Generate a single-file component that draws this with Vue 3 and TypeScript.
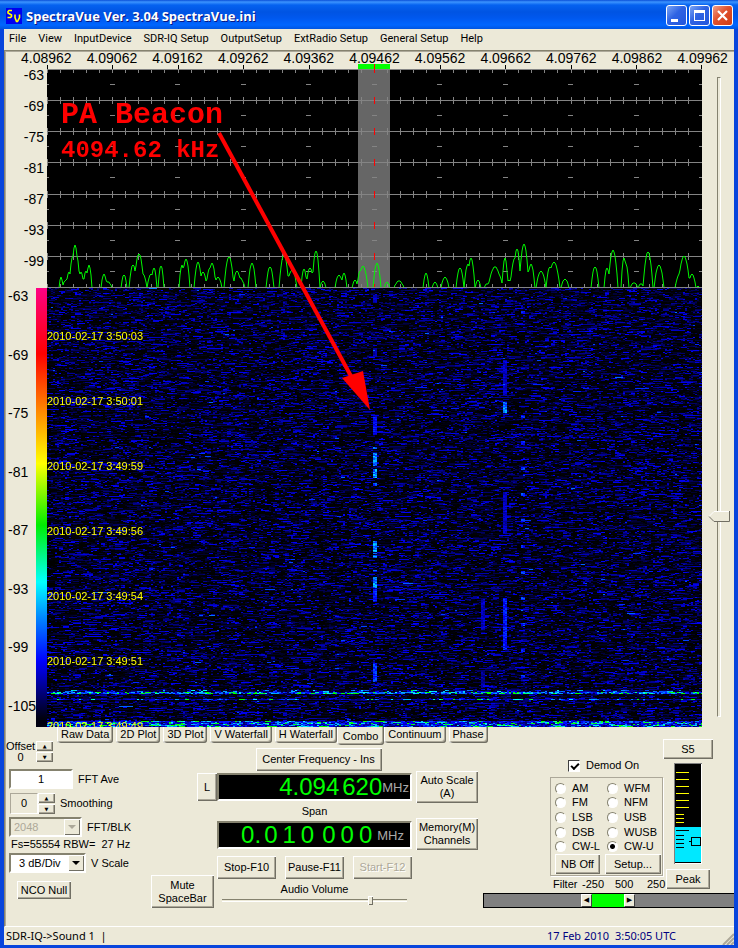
<script setup lang="ts">
import { onMounted, ref } from 'vue'

const menus = ['File', 'View', 'InputDevice', 'SDR-IQ Setup', 'OutputSetup', 'ExtRadio Setup', 'General Setup', 'Help']
const freqs = ['4.08962', '4.09062', '4.09162', '4.09262', '4.09362', '4.09462', '4.09562', '4.09662', '4.09762', '4.09862', '4.09962']
const levels = [-63, -69, -75, -81, -87, -93, -99]
const fallLevels = [-63, -69, -75, -81, -87, -93, -99, -105]
const stamps = ['3:50:03', '3:50:01', '3:49:59', '3:49:56', '3:49:54', '3:49:51', '3:49:49']
const tabs = ['Raw Data', '2D Plot', '3D Plot', 'V Waterfall', 'H Waterfall', 'Combo', 'Continuum', 'Phase']
const modes = ['AM', 'WFM', 'FM', 'NFM', 'LSB', 'USB', 'DSB', 'WUSB', 'CW-L', 'CW-U']

const activeTab = ref('Combo')
const mode = ref('CW-U')
const demod = ref(true)
const fftAve = ref('1')
const block = ref('2048')
const scale = ref('3 dB/Div')
const volume = ref(81)
const threshold = ref(69)

const W = 655
const gridY = [2, 33, 64, 95, 127, 158, 189, 220]
const majors = Array.from({ length: 11 }, (_, i) => Math.min(i * 65.5, 654.5))
const minors = Array.from({ length: 51 }, (_, i) => i * 13.1)

// Peaks of the live trace: centre x, height, half width
const peaks: [number, number, number][] = [
  [14, 11, 2], [19, 8, 4], [22, 16, 3], [26, 32, 4], [28, 43, 4], [30, 30, 3], [34, 16, 3], [39, 17, 3], [42, 23, 3],
  [57, 14, 3], [61, 6, 4], [77, 13, 3], [86, 23, 4], [90, 18, 2], [92, 34, 5], [96, 14, 4], [104, 14, 4], [107, 20, 3],
  [114, 22, 3], [135, 23, 3], [139, 29, 4], [151, 26, 4], [156, 16, 4], [163, 20, 4], [165, 25, 4], [171, 11, 4],
  [182, 31, 5], [190, 17, 4], [193, 10, 5], [205, 25, 4], [223, 21, 4], [237, 33, 5], [245, 18, 5], [257, 19, 3],
  [263, 20, 4], [269, 37, 4], [276, 7, 3], [292, 13, 4], [297, 15, 3], [308, 8, 3], [313, 17, 3], [316, 22, 5],
  [330, 25, 4], [340, 6, 3], [352, 7, 5], [379, 15, 3], [388, 6, 3], [398, 11, 4], [413, 20, 4], [421, 24, 4],
  [424, 30, 4], [431, 8, 3], [440, 4, 3], [448, 21, 7], [451, 14, 5], [458, 30, 3], [462, 8, 3], [468, 30, 5],
  [470, 39, 4], [477, 44, 5], [484, 24, 4], [494, 17, 5], [503, 21, 4], [507, 26, 6], [518, 9, 4], [548, 21, 4],
  [560, 20, 3], [566, 38, 5], [577, 30, 3], [579, 24, 3], [587, 5, 4], [594, 4, 3], [601, 36, 5], [612, 23, 5],
  [634, 16, 6], [637, 32, 6], [645, 14, 4], [651, 2, 2],
]

function tracePoints(): string {
  const points: string[] = []
  for (let x = 0; x <= W; x++) {
    let h = 0
    for (const [c, height, half] of peaks) {
      const d = Math.abs(x - c) / half
      if (d < 1) h = Math.max(h, height * (1 - d * d))
    }
    points.push(`${x},${Math.round(220 - h)}`)
  }
  return points.join(' ')
}
const trace = tracePoints()

const fall = ref<HTMLCanvasElement | null>(null)

// Vertical carriers: x, start y, end y, strength
const carriers: [number, number, number, number][] = [
  [326, 7, 15, 0.9], [326, 60, 68, 0.8], [326, 129, 147, 1.2], [326, 159, 161, 1.7], [326, 165, 178, 1.9],
  [326, 181, 190, 1.9], [326, 195, 198, 1.5], [326, 253, 264, 1.9], [326, 267, 270, 1.9], [326, 282, 284, 1.5],
  [326, 289, 300, 1.9], [326, 301, 314, 1.3], [326, 375, 394, 1.4], [456, 72, 108, 0.95], [456, 114, 125, 1.8],
  [456, 204, 246, 0.9], [456, 310, 362, 1.3], [434, 312, 342, 0.9], [434, 382, 400, 0.7],
]
const blips = [24, 128, 154, 180, 206, 232, 258, 284, 310, 336, 362, 388]

onMounted(() => {
  const ctx = fall.value?.getContext('2d')
  if (!ctx) return
  const H = 439
  let seed = 90210
  const rnd = () => {
    seed = (seed + 0x6d2b79f5) | 0
    let t = Math.imul(seed ^ (seed >>> 15), 1 | seed)
    t = (t + Math.imul(t ^ (t >>> 7), 61 | t)) ^ t
    return ((t ^ (t >>> 14)) >>> 0) / 4294967296
  }
  const img = ctx.createImageData(W, H)
  for (let y = 0; y < H; y++) {
    let v = 0
    for (let x = 0; x < W; x += 2) {
      if (rnd() > 0.42) v = Math.pow(rnd(), 3.6) * (rnd() > 0.97 ? 1.45 : 1)
      let s = v
      for (const [cx, y0, y1, k] of carriers) {
        if (y >= y0 && y < y1 && x >= cx && x <= cx + 3) s = Math.max(s, k * (0.6 + 0.4 * rnd()))
      }
      for (const by of blips) {
        if (Math.abs(y - by) < 2 && x >= 474 && x < 478) s = Math.max(s, 0.8 + rnd() * 0.6)
      }
      if (y === 110 && x < 430 && rnd() > 0.6) s += 0.35
      if (y >= 402 && y <= 403) s += 0.9 * v + 0.3 * rnd()
      if (y >= 404 && y <= 405) s += rnd() > 0.25 ? 0.8 + v + rnd() * 0.8 : 0.3
      if (y === 411) s += 0.3 + v + rnd() * 0.4
      if (y >= 433) s += 0.2 + v * 1.2 + rnd() * 0.9
      let g = 0
      let b = 0
      if (s < 1) b = s * 255
      else if (s < 2) { g = (s - 1) * 255; b = 255 }
      else { g = 255; b = Math.max(0, 255 - (s - 2) * 900) }
      for (let k = 0; k < 2 && x + k < W; k++) {
        const i = (y * W + x + k) * 4
        img.data[i] = 0
        img.data[i + 1] = g
        img.data[i + 2] = b
        img.data[i + 3] = 255
      }
    }
  }
  ctx.putImageData(img, 0, 0)
})
</script>

<template>
  <div class="window">
    <header class="title">
      <svg class="logo" viewBox="0 0 16 16" aria-hidden="true">
        <rect width="16" height="16" fill="#0000f0" />
        <path d="M6 2.500H3L2 3.500V5L5.500 7V8.500L4.500 9.500H1.500M9 6.500V9.500L10.500 13.500H11.500L13.500 9.500V6.500" fill="none" stroke="#ff0" stroke-width="1.600" />
      </svg>
      <h1>SpectraVue Ver. 3.04 SpectraVue.ini</h1>
      <div class="caption">
        <button aria-label="Minimize"><svg viewBox="0 0 21 21"><path d="M5 14h7v3H5z" fill="#fff" /></svg></button>
        <button aria-label="Maximize"><svg viewBox="0 0 21 21"><path d="M5 5h11v11H5zM6 8v7h9V8z" fill="#fff" fill-rule="evenodd" /></svg></button>
        <button class="close" aria-label="Close"><svg viewBox="0 0 21 21"><path d="M6 6l9 9M15 6l-9 9" stroke="#fff" stroke-width="2.200" /></svg></button>
      </div>
    </header>

    <nav class="menu">
      <button v-for="m in menus" :key="m">{{ m }}</button>
    </nav>

    <main class="client">
      <section class="display">
        <div class="freq-axis"><span v-for="f in freqs" :key="f">{{ f }}</span></div>

        <div class="spec-levels"><span v-for="l in levels" :key="l">{{ l }}</span></div>
        <div class="fall-levels">
          <div class="numbers"><span v-for="l in fallLevels" :key="l">{{ l }}</span></div>
          <div class="ramp"></div>
        </div>

        <div class="plot">
          <svg class="spectrum" viewBox="0 0 655 224" preserveAspectRatio="none">
            <g shape-rendering="crispEdges">
              <rect y="5" width="655" height="219" fill="#000" />
              <g transform="translate(0 4)">
                <rect x="311" y="-4" width="32" height="5" fill="#0f0" />
                <rect x="311" y="1" width="32" height="219" fill="#666" />
                <g stroke="#848484" stroke-width="1">
                  <path v-for="y in gridY" :key="y" :d="`M0 ${y - 0.5}H655`" />
                  <template v-for="y in gridY" :key="y">
                    <path v-for="x in minors" :key="x" :d="`M${x} ${y < 5 ? y : y - 4}V${y + 3}`" />
                  </template>
                  <template v-for="y in gridY.slice(0, 7)" :key="y">
                    <path v-for="x in majors" :key="x" :d="`M${x - 3} ${y + 14.5}H${x + 2}`" />
                  </template>
                </g>
                <path v-for="x in majors" :key="x" :d="`M${x} -3V1`" stroke="#000" />
                <path v-for="y in gridY" :key="y" :d="`M327.500 ${y < 5 ? -4 : y - 4}V${y + 3}`" stroke="#f00" />
              </g>
            </g>
            <g transform="translate(0 4)">
              <polyline :points="trace" fill="none" stroke="#00f800" stroke-width="1" />
              <path d="M0 219.500H655" stroke="#848484" shape-rendering="crispEdges" />
            </g>
          </svg>
          <div class="waterfall">
            <canvas ref="fall" width="655" height="439"></canvas>
            <ol class="stamps"><li v-for="s in stamps" :key="s">2010-02-17 {{ s }}</li></ol>
          </div>
          <svg class="arrow" viewBox="0 0 655 663" preserveAspectRatio="none" aria-hidden="true">
            <path d="M172 69L305 314" stroke="#f00" stroke-width="4" />
            <path d="M323 346L295 314L316 307Z" fill="#f00" />
          </svg>
          <div class="note">
            <p class="big">PA Beacon</p>
            <p>4094.62 kHz</p>
          </div>
        </div>

        <div class="thresh"><input v-model="threshold" type="range" aria-label="Threshold" /></div>
      </section>

      <section class="panel">
        <div class="tabs" role="tablist">
          <button v-for="t in tabs" :key="t" role="tab" :class="{ on: t === activeTab }" @click="activeTab = t">{{ t }}</button>
        </div>

        <div class="body">
          <div class="left">
            <div class="offset">
              <div>Offset<br />0</div>
              <div class="spin"><button aria-label="Offset up">▲</button><button aria-label="Offset down">▼</button></div>
            </div>
            <label class="row"><input v-model="fftAve" class="sunk" type="text" />FFT Ave</label>
            <div class="row smooth">
              <output id="smoothing">0</output>
              <div class="spin"><button aria-label="Smoothing up">▲</button><button aria-label="Smoothing down">▼</button></div>
              <label for="smoothing">Smoothing</label>
            </div>
            <label class="row blk">
              <span class="combo off"><select v-model="block" disabled><option>2048</option></select><i></i></span>FFT/BLK
            </label>
            <p class="rate">Fs=55554 RBW=&nbsp; 27 Hz</p>
            <label class="row">
              <span class="combo"><select v-model="scale"><option>3 dB/Div</option></select><i></i></span>V Scale
            </label>
            <button class="btn nco">NCO Null</button>
          </div>

          <div class="side">
            <button class="btn lock">L</button>
            <button class="btn mute">Mute<br />SpaceBar</button>
          </div>

          <div class="tune">
            <button class="btn center">Center Frequency - Ins</button>
            <div class="readout main"><b>4.094</b><b>620</b><span>MHz</span></div>
            <p>Span</p>
            <div class="readout span"><b>0.</b><b>0</b><b>1</b><b class="grp">0</b><b>0</b><b>0</b><b>0</b><span>MHz</span></div>
            <div class="runs">
              <button class="btn">Stop-F10</button>
              <button class="btn">Pause-F11</button>
              <button class="btn" disabled>Start-F12</button>
            </div>
            <label class="vol">Audio Volume<input v-model="volume" type="range" /></label>
          </div>

          <div class="extra">
            <button class="btn">Auto Scale<br />(A)</button>
            <button class="btn">Memory(M)<br />Channels</button>
          </div>

          <div class="radio">
            <div class="radio-top">
              <div class="demod">
                <label class="check"><input v-model="demod" type="checkbox" />Demod On</label>
                <fieldset>
                  <div class="modes">
                    <label v-for="m in modes" :key="m"><input v-model="mode" type="radio" name="mode" :value="m" />{{ m }}</label>
                  </div>
                  <div class="pair"><button class="btn">NB Off</button><button class="btn">Setup...</button></div>
                </fieldset>
                <div class="filter-text"><span>Filter</span><span>-250</span><span>500</span><span>250</span></div>
              </div>
              <div class="meter">
                <button class="btn">S5</button>
                <svg viewBox="0 0 28 101" shape-rendering="crispEdges" role="img" aria-label="Signal meter">
                  <rect width="28" height="101" fill="#fff" />
                  <path d="M0 101V0H28V1H1V101Z" fill="#808080" />
                  <rect x="1" y="1" width="26" height="99" fill="#000" />
                  <rect x="1" y="64" width="26" height="35" fill="#00e8ff" />
                  <path d="M2 9.500H15M2 16.500H15M2 23.500H15M2 30.500H15M2 37.500H15M2 44.500H15M2 51.500H10M2 55.500H10M2 59.500H10" stroke="#ff0" />
                  <path d="M2 67.500H15M2 72.500H10M2 76.500H10M2 80.500H10M2 84.500H10M15 78.500H18M17.500 74.500H26.500V82.500H17.500Z" fill="none" stroke="#000" />
                </svg>
                <button class="btn peak">Peak</button>
              </div>
            </div>
            <div class="filter">
              <button aria-label="Lower edge">◀</button><div class="band"></div><button aria-label="Upper edge">▶</button>
            </div>
          </div>
        </div>
      </section>
    </main>

    <footer class="status">
      <span>SDR-IQ-&gt;Sound 1 &nbsp;|</span>
      <time>17 Feb 2010&nbsp; 3:50:05 UTC</time>
      <svg class="grip" viewBox="0 0 12 12" aria-hidden="true">
        <path d="M1 12L12 1M5 12L12 5M9 12L12 9" stroke="#aca899" stroke-width="2" />
      </svg>
    </footer>
  </div>
</template>

<style>
body {
  background: #0a48d8;
}
</style>

<style scoped>
* {
  box-sizing: border-box;
}
button,
input,
select {
  font: inherit;
  color: inherit;
  margin: 0;
}
p,
h1,
ol {
  margin: 0;
  padding: 0;
}
.window {
  display: flex;
  flex-direction: column;
  min-height: 100vh;
  min-width: 720px;
  border: solid #0845dc;
  border-width: 0 4px 4px;
  background: #ece9d8;
  font: 11px/13px 'Liberation Sans', Arial, sans-serif;
  color: #000;
}
.title {
  display: flex;
  align-items: center;
  gap: 4px;
  height: 29px;
  margin: 0 -4px;
  padding: 2px 5px 0 6px;
  background: linear-gradient(#0a4fd8 0, #3c94ff 2px, #0562f0 5px, #0054e3 12px, #0058ee 18px, #0066ff 25px, #0055e0 29px);
}
.logo {
  width: 16px;
  height: 16px;
}
.title h1 {
  flex: 1;
  font: bold 13px/18px 'Open Sans', 'Noto Sans', sans-serif;
  color: #fff;
  text-shadow: 1px 1px #0a1883;
}
.caption {
  display: flex;
  gap: 2px;
}
.caption button {
  width: 21px;
  height: 21px;
  padding: 0;
  border: 1px solid #fff;
  border-radius: 3px;
  background: linear-gradient(135deg, #7ba5f5, #2f63e3 45%, #2257dc);
}
.caption svg {
  display: block;
  margin: -1px;
  width: 21px;
}
.caption .close {
  background: linear-gradient(135deg, #f0a08a, #e0502c 45%, #cf3c14);
}
.menu {
  display: flex;
  height: 21px;
  padding-bottom: 3px;
  font: 11px/17px Roboto, sans-serif;
}
.menu button {
  padding: 0 6px;
  border: 0;
  background: none;
  white-space: nowrap;
}
.menu button:first-child {
  padding-left: 5px;
}
.client {
  flex: 1;
  border: solid #85826f;
  border-width: 1px 0 0 1px;
  box-shadow: inset 1px 1px #aca899;
  border-bottom: 1px solid #fff;
}

.display {
  display: grid;
  grid-template-columns: 42px 1fr 32px;
  grid-template-rows: 13px 224px 439px;
}
.freq-axis {
  grid-area: 1 / 1 / 2 / 4;
  display: flex;
  justify-content: space-between;
  padding: 0 6px 0 16px;
  font-size: 14px;
  line-height: 14px;
}
.spec-levels {
  grid-area: 2 / 1;
  display: grid;
  grid-auto-rows: 31px;
  padding: 3px 3px 0 0;
  font-size: 14px;
  line-height: 17px;
  text-align: right;
}
.fall-levels {
  grid-area: 3 / 1;
  display: flex;
}
.numbers {
  flex: 1;
  width: 31px;
  display: flex;
  flex-direction: column;
  justify-content: space-between;
  padding: 0 0 12px 3px;
  overflow: hidden;
  font-size: 14px;
  line-height: 17px;
}
.ramp {
  width: 11px;
  background: linear-gradient(#ff0084 0, #f00 15%, #f80 28%, #ff0 40%, #0e0 54%, #0ff 67%, #08f 75%, #00f 85%, #000010 98%);
}
.plot {
  grid-area: 2 / 2 / 4 / 3;
  position: relative;
  min-width: 0;
}
.spectrum {
  display: block;
  width: 100%;
  height: 224px;
}
.waterfall {
  position: relative;
  height: 439px;
  overflow: hidden;
  background: #000;
}
.waterfall canvas {
  display: block;
  width: 100%;
  height: 100%;
}
.stamps {
  position: absolute;
  inset: 0;
  display: grid;
  grid-auto-rows: 65px;
  padding-top: 42px;
  list-style: none;
  color: #ff0;
}
.arrow {
  position: absolute;
  inset: 0;
  width: 100%;
  height: 100%;
}
.note {
  position: absolute;
  left: 14px;
  top: 33px;
  font: bold 24px/36px 'Liberation Mono', 'Courier New', monospace;
  color: #f00;
}
.note .big {
  font-size: 30px;
}
.thresh {
  grid-area: 2 / 3 / 4 / 4;
  padding: 13px 0 10px 6px;
}
input[type='range'] {
  appearance: none;
  background: none;
}
.thresh input {
  display: block;
  width: 22px;
  height: 100%;
  writing-mode: vertical-lr;
}
.thresh input::-webkit-slider-runnable-track {
  width: 4px;
  height: 100%;
  border: solid;
  border-width: 1px;
  border-color: #85826f #fff #fff #85826f;
}
.thresh input::-webkit-slider-thumb {
  appearance: none;
  width: 22px;
  height: 11px;
  margin-left: -10px;
  background: url("data:image/svg+xml,%3Csvg xmlns='http://www.w3.org/2000/svg' width='22' height='11'%3E%3Cpath d='M1 5.500L6 .5H21.500V10.500H6Z' fill='%23ece9d8'/%3E%3Cpath d='M1 5.500L6 .5H21' fill='none' stroke='%23fff'/%3E%3Cpath d='M1 5.500L6 10.500H21.500V0' fill='none' stroke='%23716f64'/%3E%3C/svg%3E") no-repeat;
}

.panel {
  display: grid;
  grid-template-columns: 52px 1fr;
}
.tabs {
  grid-area: 1 / 2;
  z-index: 1;
  justify-self: start;
  display: flex;
  align-items: flex-start;
  gap: 3px;
}
.tabs button {
  height: 16px;
  padding: 0 4px 2px;
  border: 0;
  border-radius: 0 0 3px 3px;
  background: #ece9d8;
  box-shadow: inset 1px 0 #fff, inset -1px -1px #716f64, inset -2px -2px #aca899;
  line-height: 13px;
  white-space: nowrap;
}
.tabs .on {
  height: 18px;
  padding: 1px 6px 0;
  margin: 0 -3px;
}
.body {
  grid-area: 1 / 1 / 2 / 3;
  display: grid;
  grid-template-columns: 146px 66px 195px 66px 1fr;
  height: 199px;
}
.btn {
  padding: 0 2px;
  border: 0;
  background: #ece9d8;
  box-shadow: inset 1px 1px #fff, inset -1px -1px #716f64, inset -2px -2px #aca899;
  text-align: center;
  white-space: nowrap;
}
.btn:disabled {
  color: #aca899;
  text-shadow: 1px 1px #fff;
}
.left {
  display: flex;
  flex-direction: column;
  align-items: flex-start;
  padding: 14px 0 0 4px;
}
.offset {
  display: flex;
  gap: 1px;
  margin-left: -3px;
  height: 28px;
  line-height: 11px;
  text-align: center;
}
.spin {
  display: flex;
  flex-direction: column;
  gap: 1px;
}
.spin button {
  width: 17px;
  height: 10px;
  padding: 0;
  border: 0;
  background: #ece9d8;
  box-shadow: inset 1px 1px #fff, inset -1px -1px #716f64, inset -2px -2px #aca899;
  font: 5px/9px 'DejaVu Sans', sans-serif;
}
.row {
  display: flex;
  align-items: center;
  gap: 5px;
}
.sunk {
  width: 64px;
  height: 20px;
  padding: 0;
  border: 2px solid;
  border-color: #85826f #fff #fff #85826f;
  background: #fff;
  text-align: center;
}
.smooth {
  gap: 0;
  margin: 4px 0 3px 1px;
}
.smooth output {
  width: 28px;
  height: 21px;
  border: 1px solid;
  border-color: #aca899 #fff #fff #aca899;
  line-height: 19px;
  text-align: center;
}
.smooth label {
  margin-left: 5px;
}
.combo {
  position: relative;
  width: 77px;
}
.combo select {
  display: block;
  appearance: none;
  width: 100%;
  height: 20px;
  padding: 0 18px 0 8px;
  border: 2px solid;
  border-color: #85826f #fff #fff #85826f;
  border-radius: 0;
  background: #fff;
  opacity: 1;
}
.combo i {
  position: absolute;
  top: 2px;
  right: 2px;
  width: 16px;
  height: 16px;
  background: #ece9d8;
  box-shadow: inset 1px 1px #fff, inset -1px -1px #716f64;
  pointer-events: none;
}
.combo i::after {
  content: '';
  position: absolute;
  left: 4px;
  top: 6px;
  border: 4px solid transparent;
  border-top-color: #000;
  border-bottom: 0;
}
.combo.off {
  width: 73px;
}
.combo.off select {
  padding-left: 3px;
  background: #ece9d8;
  color: #aca899;
}
.combo.off i::after {
  border-top-color: #aca899;
}
.rate {
  margin: 1px 0 2px 2px;
  white-space: nowrap;
}
.nco {
  width: 54px;
  height: 18px;
  margin: 8px 0 0 8px;
}
.side {
  display: flex;
  flex-direction: column;
  justify-content: space-between;
  padding: 46px 0 18px;
}
.lock {
  align-self: flex-end;
  width: 20px;
  height: 28px;
}
.mute {
  width: 63px;
  height: 33px;
}
.tune {
  display: flex;
  flex-direction: column;
  padding-top: 21px;
}
.tune p {
  padding: 4px 0 3px;
  text-align: center;
}
.center {
  align-self: center;
  width: 126px;
  height: 23px;
  margin: 0 0 2px 8px;
}
.readout {
  display: flex;
  justify-content: flex-end;
  align-items: center;
  height: 28px;
  padding-right: 1px;
  border: 2px solid;
  border-color: #85826f #fff #fff #85826f;
  background: #000;
  color: #0f0;
}
.readout b {
  font: 24px/24px 'Liberation Sans', Arial, sans-serif;
}
.readout span {
  font-size: 13px;
  color: #a8a8a8;
}
.main b + b {
  margin-left: 3px;
}
.readout.span {
  gap: 5px;
  padding-right: 6px;
}
.readout.span b:first-child {
  margin-right: -2px;
}
.readout.span .grp {
  margin-right: 3px;
}
.runs {
  display: flex;
  justify-content: space-between;
  margin-top: 7px;
}
.runs .btn {
  width: 59px;
  height: 23px;
}
.vol {
  margin-top: 4px;
  text-align: center;
}
.vol input {
  display: block;
  width: 185px;
  height: 9px;
  margin: 0 5px;
}
.vol input::-webkit-slider-runnable-track {
  height: 3px;
  border-top: 1px solid #85826f;
  border-bottom: 1px solid #fff;
}
.vol input::-webkit-slider-thumb {
  appearance: none;
  width: 5px;
  height: 9px;
  margin-top: -4px;
  background: #ece9d8;
  box-shadow: inset 1px 1px #fff, inset -1px -1px #716f64;
}
.extra {
  display: flex;
  flex-direction: column;
  gap: 15px;
  padding: 44px 0 0 4px;
}
.extra .btn {
  height: 32px;
}
.radio {
  display: flex;
  flex-direction: column;
  min-width: 0;
  padding: 12px 0 18px 5px;
}
.radio-top {
  flex: 1;
  display: flex;
  justify-content: flex-end;
  padding-right: 21px;
}
.demod {
  width: 113px;
  padding-top: 20px;
}
.check {
  display: flex;
  align-items: center;
  gap: 6px;
  height: 13px;
  margin: 0 0 5px 18px;
}
.check input {
  appearance: none;
  width: 12px;
  height: 12px;
  border: 1px solid;
  border-color: #404040 #fff #fff #404040;
  background: #fff;
}
.check input:checked::after {
  content: '';
  display: block;
  width: 6px;
  height: 3px;
  margin: 2px;
  border: solid #000;
  border-width: 0 0 2px 2px;
  transform: rotate(-45deg);
}
fieldset {
  min-width: 0;
  margin: 0;
  padding: 3px 1px 1px 4px;
  border: 1px solid #aca899;
  box-shadow: 1px 1px #fff;
}
.modes {
  display: grid;
  grid-template-columns: 52px 1fr;
  grid-template-rows: repeat(5, 1fr);
  height: 73px;
}
.modes label {
  display: flex;
  align-items: center;
  gap: 6px;
}
.modes input {
  appearance: none;
  width: 11px;
  height: 11px;
  border: 1px solid;
  border-color: #85826f #fff #fff #85826f;
  border-radius: 50%;
  background: #fff;
}
.modes input:checked {
  background: radial-gradient(#000 2px, #fff 3px);
}
.pair {
  display: flex;
  justify-content: space-between;
}
.pair .btn {
  width: 45px;
  height: 20px;
}
.pair .btn + .btn {
  width: 56px;
}
.filter-text {
  display: grid;
  grid-template-columns: 29px 33px 32px auto;
  padding: 2px 0 0 3px;
  margin-right: -3px;
}
.meter {
  display: flex;
  flex-direction: column;
  align-items: center;
  width: 50px;
}
.meter .btn {
  width: 50px;
  height: 20px;
}
.meter svg {
  width: 28px;
  height: 101px;
  margin: 4px 0 5px;
}
.meter .peak {
  width: 44px;
}
.filter {
  display: flex;
  height: 15px;
  padding-left: 97px;
  border: solid #000;
  border-width: 1px 0 1px 1px;
  background: #808080;
}
.filter button {
  width: 11px;
  padding: 0;
  border: 1px solid;
  border-color: #fff #404040 #404040 #fff;
  background: #ece9d8;
  font: 7px/11px 'DejaVu Sans', sans-serif;
}
.band {
  width: 32px;
  background: #0f0;
}
.status {
  display: flex;
  align-items: center;
  height: 18px;
  padding-left: 2px;
  font: 11px/16px 'Noto Sans', sans-serif;
}
.status time {
  margin-left: auto;
  color: #000080;
}
.grip {
  width: 12px;
  height: 12px;
  margin: 5px 0 0 46px;
}
</style>
